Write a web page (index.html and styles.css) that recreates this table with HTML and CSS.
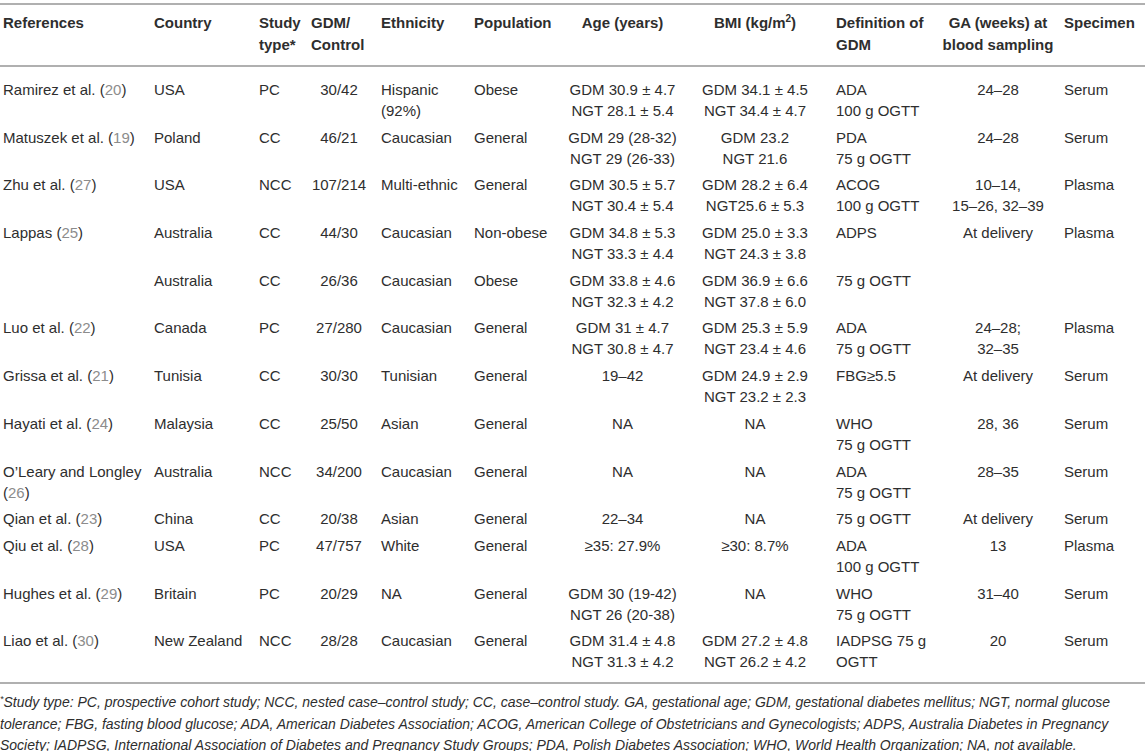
FILE: index.html
```html
<!DOCTYPE html>
<html lang="en">
<head>
<meta charset="utf-8">
<title>Table</title>
<link rel="stylesheet" href="styles.css">
</head>
<body>
<table class="tbl">
  <colgroup>
    <col class="w1"><col class="w2"><col class="w3"><col class="w4"><col class="w5"><col class="w6"><col class="w7"><col class="w8"><col class="w9"><col class="w10"><col class="w11">
  </colgroup>
  <thead>
    <tr>
      <th>References</th>
      <th>Country</th>
      <th>Study type*</th>
      <th class="gc">GDM/ Control</th>
      <th>Ethnicity</th>
      <th>Population</th>
      <th class="c">Age (years)</th>
      <th class="c">BMI (kg/m<sup>2</sup>)</th>
      <th class="def">Definition of GDM</th>
      <th class="c">GA (weeks) at blood sampling</th>
      <th class="sp">Specimen</th>
    </tr>
  </thead>
  <tbody>
    <tr>
      <td>Ramirez et al. (<span class="ref">20</span>)</td><td>USA</td><td>PC</td><td class="gc c">30/42</td><td>Hispanic<br>(92%)</td><td>Obese</td>
      <td class="c">GDM 30.9 ± 4.7<br>NGT 28.1 ± 5.4</td><td class="c">GDM 34.1 ± 4.5<br>NGT 34.4 ± 4.7</td><td class="def">ADA<br>100 g OGTT</td><td class="c">24–28</td><td class="sp">Serum</td>
    </tr>
    <tr>
      <td>Matuszek et al. (<span class="ref">19</span>)</td><td>Poland</td><td>CC</td><td class="gc c">46/21</td><td>Caucasian</td><td>General</td>
      <td class="c">GDM 29 (28-32)<br>NGT 29 (26-33)</td><td class="c">GDM 23.2<br>NGT 21.6</td><td class="def">PDA<br>75 g OGTT</td><td class="c">24–28</td><td class="sp">Serum</td>
    </tr>
    <tr>
      <td>Zhu et al. (<span class="ref">27</span>)</td><td>USA</td><td>NCC</td><td class="gc c">107/214</td><td>Multi-ethnic</td><td>General</td>
      <td class="c">GDM 30.5 ± 5.7<br>NGT 30.4 ± 5.4</td><td class="c">GDM 28.2 ± 6.4<br>NGT25.6 ± 5.3</td><td class="def">ACOG<br>100 g OGTT</td><td class="c">10–14,<br>15–26, 32–39</td><td class="sp">Plasma</td>
    </tr>
    <tr>
      <td>Lappas (<span class="ref">25</span>)</td><td>Australia</td><td>CC</td><td class="gc c">44/30</td><td>Caucasian</td><td>Non-obese</td>
      <td class="c">GDM 34.8 ± 5.3<br>NGT 33.3 ± 4.4</td><td class="c">GDM 25.0 ± 3.3<br>NGT 24.3 ± 3.8</td><td class="def">ADPS</td><td class="c">At delivery</td><td class="sp">Plasma</td>
    </tr>
    <tr>
      <td></td><td>Australia</td><td>CC</td><td class="gc c">26/36</td><td>Caucasian</td><td>Obese</td>
      <td class="c">GDM 33.8 ± 4.6<br>NGT 32.3 ± 4.2</td><td class="c">GDM 36.9 ± 6.6<br>NGT 37.8 ± 6.0</td><td class="def">75 g OGTT</td><td class="c"></td><td class="sp"></td>
    </tr>
    <tr>
      <td>Luo et al. (<span class="ref">22</span>)</td><td>Canada</td><td>PC</td><td class="gc c">27/280</td><td>Caucasian</td><td>General</td>
      <td class="c">GDM 31 ± 4.7<br>NGT 30.8 ± 4.7</td><td class="c">GDM 25.3 ± 5.9<br>NGT 23.4 ± 4.6</td><td class="def">ADA<br>75 g OGTT</td><td class="c">24–28;<br>32–35</td><td class="sp">Plasma</td>
    </tr>
    <tr>
      <td>Grissa et al. (<span class="ref">21</span>)</td><td>Tunisia</td><td>CC</td><td class="gc c">30/30</td><td>Tunisian</td><td>General</td>
      <td class="c">19–42</td><td class="c">GDM 24.9 ± 2.9<br>NGT 23.2 ± 2.3</td><td class="def">FBG≥5.5</td><td class="c">At delivery</td><td class="sp">Serum</td>
    </tr>
    <tr>
      <td>Hayati et al. (<span class="ref">24</span>)</td><td>Malaysia</td><td>CC</td><td class="gc c">25/50</td><td>Asian</td><td>General</td>
      <td class="c">NA</td><td class="c">NA</td><td class="def">WHO<br>75 g OGTT</td><td class="c">28, 36</td><td class="sp">Serum</td>
    </tr>
    <tr>
      <td>O’Leary and Longley<br>(<span class="ref">26</span>)</td><td>Australia</td><td>NCC</td><td class="gc c">34/200</td><td>Caucasian</td><td>General</td>
      <td class="c">NA</td><td class="c">NA</td><td class="def">ADA<br>75 g OGTT</td><td class="c">28–35</td><td class="sp">Serum</td>
    </tr>
    <tr>
      <td>Qian et al. (<span class="ref">23</span>)</td><td>China</td><td>CC</td><td class="gc c">20/38</td><td>Asian</td><td>General</td>
      <td class="c">22–34</td><td class="c">NA</td><td class="def">75 g OGTT</td><td class="c">At delivery</td><td class="sp">Serum</td>
    </tr>
    <tr>
      <td>Qiu et al. (<span class="ref">28</span>)</td><td>USA</td><td>PC</td><td class="gc c">47/757</td><td>White</td><td>General</td>
      <td class="c">≥35: 27.9%</td><td class="c">≥30: 8.7%</td><td class="def">ADA<br>100 g OGTT</td><td class="c">13</td><td class="sp">Plasma</td>
    </tr>
    <tr>
      <td>Hughes et al. (<span class="ref">29</span>)</td><td>Britain</td><td>PC</td><td class="gc c">20/29</td><td>NA</td><td>General</td>
      <td class="c">GDM 30 (19-42)<br>NGT 26 (20-38)</td><td class="c">NA</td><td class="def">WHO<br>75 g OGTT</td><td class="c">31–40</td><td class="sp">Serum</td>
    </tr>
    <tr>
      <td>Liao et al. (<span class="ref">30</span>)</td><td>New Zealand</td><td>NCC</td><td class="gc c">28/28</td><td>Caucasian</td><td>General</td>
      <td class="c">GDM 31.4 ± 4.8<br>NGT 31.3 ± 4.2</td><td class="c">GDM 27.2 ± 4.8<br>NGT 26.2 ± 4.2</td><td class="def">IADPSG 75 g<br>OGTT</td><td class="c">20</td><td class="sp">Serum</td>
    </tr>
  </tbody>
</table>
<p class="note"><sup>*</sup>Study type: PC, prospective cohort study; NCC, nested case–control study; CC, case–control study. GA, gestational age; GDM, gestational diabetes mellitus; NGT, normal glucose<br>tolerance; FBG, fasting blood glucose; ADA, American Diabetes Association; ACOG, American College of Obstetricians and Gynecologists; ADPS, Australia Diabetes in Pregnancy<br>Society; IADPSG, International Association of Diabetes and Pregnancy Study Groups; PDA, Polish Diabetes Association; WHO, World Health Organization; NA, not available.</p>
</body>
</html>
```

FILE: styles.css
```css
html, body {
  margin: 0;
  padding: 0;
  background: #ffffff;
}

body {
  font-family: "Liberation Sans", Arial, sans-serif;
  color: #2e2e2e;
  font-size: 15px;
}

.tbl {
  width: 1145px;
  border-collapse: collapse;
  table-layout: fixed;
  margin-top: 3px;
}

.w1 { width: 151px; }
.w2 { width: 105px; }
.w3 { width: 52px; }
.w4 { width: 70px; }
.w5 { width: 93px; }
.w6 { width: 94px; }
.w7 { width: 115px; }
.w8 { width: 150px; }
.w9 { width: 108px; }
.w10 { width: 120px; }
.w11 { width: 87px; }

.tbl thead tr {
  border-top: 2px solid #b0b0b0;
  border-bottom: 2px solid #b0b0b0;
}

.tbl th {
  font-weight: bold;
  text-align: left;
  vertical-align: top;
  line-height: 22px;
  padding: 7px 3px 9px 3px;
}

.tbl th sup {
  font-size: 10px;
  line-height: 0;
  vertical-align: 6px;
}

.tbl td {
  vertical-align: top;
  line-height: 21px;
  padding: 2.85px 3px 2.85px 3px;
  white-space: nowrap;
}

.tbl tbody tr:first-child td {
  padding-top: 12px;
}

.tbl tbody tr:last-child td {
  padding-bottom: 10px;
}

.tbl tbody tr:last-child {
  border-bottom: 2px solid #b0b0b0;
}

.tbl .c {
  text-align: center;
}

.tbl .gc {
  padding-right: 11px;
}

.tbl .def,
.tbl .sp {
  padding-left: 6px;
}

.ref {
  color: #8c8c8c;
}

.note {
  margin: 8px 0 0 0;
  font-style: italic;
  font-size: 14px;
  line-height: 21.3px;
  white-space: nowrap;
}

.note sup {
  font-size: 9px;
  line-height: 0;
  vertical-align: 5px;
}
```
